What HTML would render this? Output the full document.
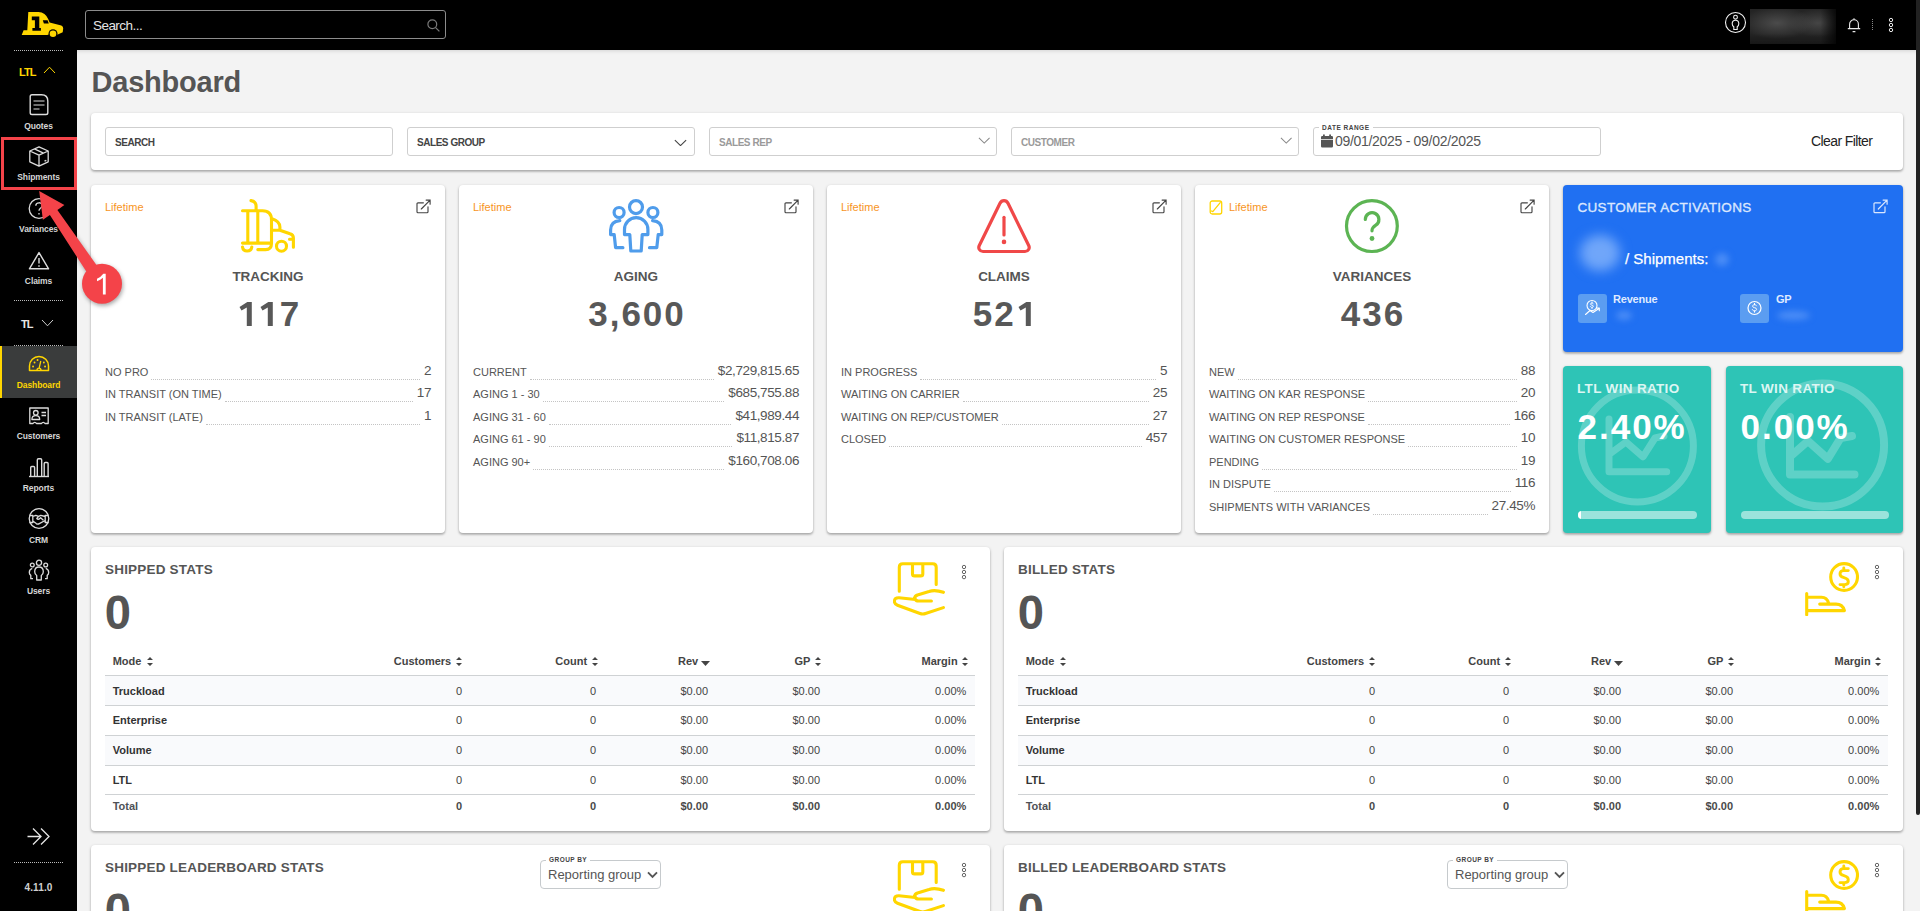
<!DOCTYPE html>
<html><head><meta charset="utf-8">
<style>
*{box-sizing:border-box;margin:0;padding:0}
html,body{width:1920px;height:911px;overflow:hidden;background:#f3f3f3;font-family:"Liberation Sans",sans-serif;color:#555}
.abs{position:absolute}
#top{position:absolute;left:0;top:0;width:1920px;height:50px;background:#000;box-shadow:0 1px 4px rgba(0,0,0,.13)}
#side{position:absolute;left:0;top:0;width:77px;height:911px;background:#000}
#sb{position:absolute;left:1916px;top:0;width:4px;height:815px;background:#222;border-radius:0 0 2px 2px}
.card{position:absolute;background:#fff;border-radius:4px;box-shadow:0 1px 3px rgba(0,0,0,.26),0 2px 2px rgba(0,0,0,.13)}
h1{position:absolute;left:91.500px;top:65px;font-size:29px;font-weight:bold;color:#555;line-height:34px;letter-spacing:-.22px}
/* stat cards */
.sc{top:185px;width:354px;height:348px}
.sc .lt{position:absolute;left:14px;top:15px;font-size:11px;line-height:14px;color:#f7941d}

.sc .ico{position:absolute;left:150px;top:14px;width:54px;height:54px;overflow:visible}
.sc .tt{position:absolute;left:0;width:100%;top:83.500px;text-align:center;font-size:13.5px;line-height:16px;font-weight:bold;color:#555}
.sc .num{position:absolute;left:0;width:100%;top:108.500px;text-align:center;font-size:35px;line-height:40px;font-weight:bold;color:#585858;letter-spacing:2px;text-indent:2px;white-space:nowrap}
.one{display:inline-block;width:21.460px;height:24px;position:relative;letter-spacing:0;text-indent:0}
.one svg{position:absolute;left:0;top:0}
.sc .rows{position:absolute;left:14px;right:14.0px;top:176px}
.r{display:flex;align-items:flex-end;height:22.5px;font-size:11px;color:#555}
.r .l{white-space:nowrap;line-height:13px;padding-bottom:4.800px}
.r .d{flex:1;border-bottom:1px dotted #c4c4c4;margin:0 4px 4px 3px;height:1px}
.r .v{font-size:13.500px;line-height:15px;white-space:nowrap;letter-spacing:-.4px;padding-bottom:5.700px}

/* topbar */
#srch{position:absolute;left:85px;top:10px;width:361px;height:29px;border:1px solid #8c8c8c;border-radius:3px}
#srch span{position:absolute;left:7px;top:6.600px;font-size:13.5px;line-height:16px;color:#e4e4e4;letter-spacing:-.55px}
#blur{position:absolute;left:1750px;top:9px;width:86px;height:35px;background:linear-gradient(to right,rgba(0,0,0,0) 82%,rgba(0,0,0,.75) 100%),linear-gradient(to bottom,rgba(0,0,0,0) 70%,rgba(0,0,0,.35) 100%),radial-gradient(ellipse 36px 16px at 27px 14px,#4b4b4b 0%,rgba(75,75,75,0) 100%),radial-gradient(ellipse 30px 14px at 68px 14px,#454545 0%,rgba(69,69,69,0) 100%),#242424}
/* sidebar */
.dot{position:absolute;left:14px;width:49px;height:0;border-top:1px dotted #bbb}
.si{position:absolute;left:0;width:77px;text-align:center;font-size:8.5px;font-weight:bold;color:#d6d6d6;line-height:10px;letter-spacing:-.1px}
.sic{position:absolute}
/* filter */
.fi{position:absolute;top:14px;width:288px;height:29px;border:1px solid #cfcfcf;border-radius:3px;background:#fff}
.fi .lb{position:absolute;left:9px;top:9px;font-size:10px;line-height:11px;font-weight:bold;letter-spacing:-.45px;color:#444}
.fi .lb.g{color:#9a9a9a}

#blue .t{position:absolute;left:14.500px;top:15px;font-size:13.500px;line-height:16px;color:#dbe7fe;letter-spacing:.3px;white-space:nowrap;-webkit-text-stroke:.35px #dbe7fe}
.blob{position:absolute;border-radius:50%;filter:blur(4px);background:#6ba2f8}
.bx{position:absolute;top:109px;width:29px;height:29px;border-radius:3px;background:#5b9df1}
.bl{position:absolute;top:108px;font-size:11px;line-height:13px;font-weight:bold;color:#dfeaff;letter-spacing:-.2px}
.tc .t{position:absolute;left:14px;top:15px;font-size:13.500px;line-height:16px;font-weight:bold;color:#dcf6f3;white-space:nowrap;letter-spacing:.33px}
.tc .n{position:absolute;left:14.500px;top:41px;font-size:35px;line-height:40px;font-weight:bold;color:#fff;white-space:nowrap;letter-spacing:2px}
.tc .pb{position:absolute;left:15px;top:145px;height:8px;border-radius:4px;background:rgba(255,255,255,.52);overflow:hidden}
.tc svg{position:absolute;left:0;top:0}

.pn .pt{position:absolute;left:14px;top:15.400px;font-size:13.500px;line-height:16px;font-weight:bold;color:#555;white-space:nowrap;letter-spacing:.2px}
.pn .big{position:absolute;left:13.800px;top:40px;font-size:47.200px;line-height:52px;font-weight:bold;color:#555}
.pn .pi{position:absolute;top:15px;width:54px;height:54px}
.pn .dots{position:absolute;top:17px;width:6px;height:16px}
.tb{position:absolute;left:14px;top:0;width:870px}
.tb .hl{position:absolute;left:0;width:870px;height:1px;background:#cfd2d4}
.tb .st{position:absolute;left:0;width:870px;height:29px;background:#f9fafc}
.tb span{position:absolute;font-size:11px;line-height:13px;white-space:nowrap;color:#444}
.tb .h{font-weight:bold;color:#444}
.tb .m{font-weight:bold;color:#333;left:7.700px}
.tb .ra{text-align:right}
.tb .f{font-weight:bold;color:#4a4a4a}
.tb svg{position:absolute}
.gb{position:absolute;top:15px;width:121px;height:29px;border:1px solid #c6cacd;border-radius:4px}
.gb .l{position:absolute;left:5px;top:-4.600px;padding:0 3px;background:#fff;font-size:6.500px;line-height:8px;font-weight:bold;color:#444;letter-spacing:.45px}
.gb .v{position:absolute;left:7px;top:6px;font-size:13px;line-height:15px;color:#555;white-space:nowrap}
</style></head><body>
<div id="top">
 <div id="srch"><span>Search...</span>
  <svg class="abs" style="left:341px;top:8px" width="13" height="13" viewBox="0 0 13 13" fill="none" stroke="#7a7a7a" stroke-width="1.2"><circle cx="5.3" cy="5.3" r="4.4"/><path d="M8.6 8.6L12.4 12.4"/></svg>
 </div>
 <svg class="abs" style="left:1724px;top:11px" width="23" height="23" viewBox="0 0 23 23" fill="none" stroke="#f2f2f2" stroke-width="1.1"><circle cx="11.5" cy="11.5" r="10"/><circle cx="11.5" cy="6.2" r="1.9"/><path d="M11.5 9.2c-2.2 0-3.3 1.6-3.3 3.6 0 1.5 0.7 2.5 1.6 3v2.7h3.4v-2.7c0.9-.5 1.6-1.5 1.6-3 0-2-1.1-3.6-3.3-3.6z"/></svg>
 <div id="blur"></div>
 <svg class="abs" style="left:1847px;top:17px" width="14" height="16" viewBox="0 0 14 16" fill="none" stroke="#e8e8e8" stroke-width="1.1"><path d="M7 1.2v1M2.6 11.5V7.2a4.4 4.4 0 0 1 8.8 0v4.3M0.8 11.6h12.4M5.6 14.6h2.8"/></svg>
 <div class="abs" style="left:1872px;top:19px;width:0;height:11px;border-left:1px dotted #888"></div>
 <svg class="abs" style="left:1888px;top:17px" width="6" height="16" viewBox="0 0 6 16" fill="none" stroke="#e8e8e8" stroke-width="1"><circle cx="3" cy="3" r="1.7"/><circle cx="3" cy="8" r="1.7"/><circle cx="3" cy="13" r="1.7"/></svg>
</div>
<div id="side">
 <svg class="abs" style="left:21px;top:11px" width="43" height="27" viewBox="0 0 43 27">
  <path fill="#ffd600" d="M7.300 0.900H17.400Q24.500 1.200 27.300 8.200L28.600 11.600L40.300 14.600Q42.400 15.400 42.200 17.600L41.700 21.300L36.800 23.600H26.800V24.100H0.700L2.600 19.200H6.300z"/>
  <circle cx="32" cy="22.800" r="4.500" fill="#000"/><circle cx="32" cy="22.800" r="3.300" fill="#ffd600"/>
  <path fill="#000" d="M10.800 5.400H18.300V17H19.900V19.700H11.400V17H13.900V9.300H10.800zM21.800 9.300H26.600L27.800 12.600H22.900z"/>
 </svg>
 <div class="dot" style="top:50px"></div>
 <div class="abs" style="left:19px;top:66px;font-size:11px;line-height:12px;font-weight:bold;color:#ffd600;letter-spacing:-.9px">LTL</div>
 <svg class="abs" style="left:43px;top:66px" width="13" height="8" viewBox="0 0 13 8" fill="none" stroke="#ffd600" stroke-width="1"><path d="M1 7L6.500 1.200L12 7"/></svg>

 <svg class="sic" style="left:28px;top:93px" width="22" height="23" viewBox="0 0 22 23" fill="none" stroke="#dcdcdc" stroke-width="1.4"><path d="M4 1.800h9.500q6.300 0 6.300 6.300v11.600q0 1.800-1.800 1.800h-14q-1.800 0-1.800-1.800v-16.100q0-1.800 1.800-1.800z"/><path d="M5.500 8h11M5.500 12h11M5.500 16h6" stroke-width="1.200"/></svg>
 <div class="si" style="top:121px">Quotes</div>

 <svg class="sic" style="left:28px;top:145px" width="22" height="23" viewBox="0 0 22 23" fill="none" stroke="#dcdcdc" stroke-width="1.300" stroke-linejoin="round"><path d="M11 1.800L20.200 6v10.800L11 21.200L1.800 16.800V6zM1.800 6L11 10.200L20.200 6M11 10.200v11M6.300 3.900l9.200 4.200"/><path d="M16.500 16.200l1.800-.9" stroke-width="1.500"/></svg>
 <div class="si" style="top:172px">Shipments</div>

 <svg class="sic" style="left:28px;top:197px" width="22" height="23" viewBox="0 0 22 23" fill="none" stroke="#dcdcdc" stroke-width="1.300"><circle cx="11" cy="11.500" r="9.800"/><path d="M7.800 8.800c0-4 6.400-4 6.400-.2 0 2.400-3.200 2.400-3.200 5.200M11 16v1.600"/></svg>
 <div class="si" style="top:224px">Variances</div>

 <svg class="sic" style="left:28px;top:251px" width="22" height="20" viewBox="0 0 22 20" fill="none" stroke="#dcdcdc" stroke-width="1.400" stroke-linejoin="round"><path d="M11 1.600L20.600 17.800H1.400z"/><path d="M11 7v5.500M11 14.200v1.600"/></svg>
 <div class="si" style="top:276px">Claims</div>

 <div class="dot" style="top:300px"></div>
 <div class="abs" style="left:21px;top:318px;font-size:11px;line-height:12px;font-weight:bold;color:#e6e6e6;letter-spacing:-.9px">TL</div>
 <svg class="abs" style="left:41px;top:319px" width="13" height="8" viewBox="0 0 13 8" fill="none" stroke="#cfcfcf" stroke-width="1"><path d="M1 1L6.500 6.800L12 1"/></svg>
 <div class="dot" style="top:345px"></div>

 <div class="abs" style="left:0;top:346px;width:77px;height:52px;background:#3a3c3c;border-left:2px solid #ffd600"></div>
 <svg class="sic" style="left:28px;top:355px" width="22" height="17" viewBox="0 0 22 17" fill="none" stroke="#ffd600" stroke-width="1.500" stroke-linejoin="round"><path d="M1.500 15.500v-4.500a9.500 9.500 0 0 1 19 0v4.500z"/><path d="M9 15.300c0-1.300 1-2.200 2-2.200s2 .9 2 2.200M11.200 12.800L12.800 6" stroke-width="1.300"/><path d="M5 11.500h.1M6.500 7.500h.1M9.500 5h.1M15.800 7.500h.1M17 11.500h.1" stroke-width="1.800" stroke-linecap="round"/></svg>
 <div class="si" style="top:380px;color:#ffd600">Dashboard</div>

 <svg class="sic" style="left:28px;top:406px" width="22" height="20" viewBox="0 0 22 20" fill="none" stroke="#dcdcdc" stroke-width="1.300" stroke-linejoin="round"><path d="M1.800 2h18.400v15.500h-3.200c-.8-1.600-2.700-1.600-3.500 0h-5c-.8-1.600-2.700-1.600-3.500 0H1.800z"/><circle cx="7.800" cy="6.800" r="2.300"/><path d="M3.900 13.500c0-2.600 1.700-3.800 3.900-3.800s3.900 1.200 3.900 3.800zM13.500 6.500h4.500M13.500 9.500h4.500"/></svg>
 <div class="si" style="top:431px">Customers</div>

 <svg class="sic" style="left:28px;top:457px" width="22" height="21" viewBox="0 0 22 21" fill="none" stroke="#dcdcdc" stroke-width="1.400"><path d="M1 19.500h20"/><path d="M2.700 19.500v-9q0-1 1-1h1.900q1 0 1 1v9M9.300 19.500v-16.500q0-1.200 1.200-1.200h2q1.200 0 1.200 1.200v16.500M16.200 19.500v-13q0-1 1-1h1.900q1 0 1 1v13"/></svg>
 <div class="si" style="top:483px">Reports</div>

 <svg class="sic" style="left:28px;top:507px" width="22" height="23" viewBox="0 0 22 23" fill="none" stroke="#dcdcdc" stroke-width="1.300" stroke-linejoin="round"><circle cx="11" cy="11.500" r="9.800"/><path d="M1.500 8.500h3.300v7h-3.300M20.500 8.500h-3.300v7h3.300M4.800 9.500l3-1.200 2.800 1 2.200-1 4.400 1.200M4.800 14l3.500 2.600c1 .7 2 .7 3 0l5.900-3.100M10.600 9.300l-1.800 2.200c.8 1 2 1 3 0l.8-.8 2.800 2.600"/></svg>
 <div class="si" style="top:535px">CRM</div>

 <svg class="sic" style="left:28px;top:559px" width="22" height="23" viewBox="0 0 22 23" fill="none" stroke="#dcdcdc" stroke-width="1.300" stroke-linejoin="round"><circle cx="11" cy="3.800" r="2.600"/><circle cx="4.300" cy="6" r="1.900"/><circle cx="17.700" cy="6" r="1.900"/><path d="M11 8c-3 0-4.300 2.200-4.300 4.800 0 1.700.8 3 2 3.700v4.500h4.600v-4.500c1.200-.7 2-2 2-3.700 0-2.600-1.300-4.800-4.300-4.800zM4.300 9.300c-2 .5-3 2.200-3 4.200 0 1.300.6 2.300 1.500 2.900v3.300h2.200M17.700 9.300c2 .5 3 2.200 3 4.200 0 1.300-.6 2.300-1.500 2.900v3.300h-2.200"/></svg>
 <div class="si" style="top:586px">Users</div>

 <svg class="sic" style="left:27px;top:827px" width="24" height="19" viewBox="0 0 24 19" fill="none" stroke="#e6e6e6" stroke-width="1.300"><path d="M0.500 9.500h13M6 1.500l8 8-8 8M14 1.500l8 8-8 8"/></svg>
 <div class="dot" style="top:862px"></div>
 <div class="abs" style="left:0;top:882px;width:77px;text-align:center;font-size:10px;line-height:11px;font-weight:bold;color:#d0d0d0;letter-spacing:.15px">4.11.0</div>
</div>
<div id="sb"></div>
<h1>Dashboard</h1>

<!-- filter card -->
<div class="card" id="filter" style="left:91px;top:113px;width:1812px;height:57px">
 <div class="fi" style="left:14px"><span class="lb">SEARCH</span></div>
 <div class="fi" style="left:316px"><span class="lb">SALES GROUP</span>
  <svg class="abs" style="left:266px;top:10.500px" width="13" height="7.800" viewBox="0 0 15 9" fill="none" stroke="#444" stroke-width="1.300"><path d="M1 1.200L7.500 7.600L14 1.200"/></svg></div>
 <div class="fi" style="left:618px"><span class="lb g">SALES REP</span>
  <svg class="abs" style="left:268px;top:9px" width="12.500" height="7.100" viewBox="0 0 14 8" fill="none" stroke="#8a8a8a" stroke-width="1.200"><path d="M1 1L7 6.800L13 1"/></svg></div>
 <div class="fi" style="left:920px"><span class="lb g">CUSTOMER</span>
  <svg class="abs" style="left:268px;top:9px" width="12.500" height="7.100" viewBox="0 0 14 8" fill="none" stroke="#8a8a8a" stroke-width="1.200"><path d="M1 1L7 6.800L13 1"/></svg></div>
 <div class="fi" style="left:1222px">
  <span class="abs" style="left:5px;top:-4px;padding:0 3px;background:#fff;font-size:6.500px;line-height:8px;font-weight:bold;color:#444;letter-spacing:.5px">DATE RANGE</span>
  <svg class="abs" style="left:7px;top:6px" width="12" height="14" viewBox="0 0 12 14" fill="#555"><path d="M2 0.600h1.800v1.400h4.400v-1.400h1.800v1.400h0.800q1.200 0 1.200 1.200v1.800h-12v-1.800q0-1.200 1.200-1.200h0.800zM0 5.800h12v6.400q0 1.200-1.200 1.200h-9.600q-1.200 0-1.200-1.200z"/></svg>
  <span class="abs" style="left:21px;top:5px;font-size:14px;line-height:16px;color:#555;letter-spacing:-.3px;white-space:nowrap">09/01/2025 - 09/02/2025</span>
 </div>
 <span class="abs" style="left:1720px;top:20px;font-size:14px;line-height:16px;color:#222;letter-spacing:-.6px;white-space:nowrap">Clear Filter</span>
</div>

<!-- stat cards -->
<div class="card sc" style="left:91px" id="c1">
  <div class="lt">Lifetime</div>
  <svg class="ico" viewBox="0 0 54 54" fill="none" stroke="#ffd600" stroke-width="3.100" stroke-linecap="round" stroke-linejoin="round"><path d="M10 1.600Q15.100 2.500 15.100 7V11.800M1.500 11.800H21.500Q30.500 11.800 30.500 21V44.500Q30.500 50.600 24.500 50.600H16.800M6.800 11.800V44.100M16.800 11.800V44.100M1.500 44.100H30.500M1.500 48A4.700 4.700 0 0 0 10.800 48M31 19.800Q38.900 22.500 38.900 28V31.200M30.500 31.200H38.900L49 34.800Q52.400 35.800 52.400 39V48.300M48.500 40.200H52"/><circle cx="40.500" cy="47.200" r="5"/></svg><svg class="ext" style="position:absolute;left:324.5px;top:13.5px;width:15px;height:15px" viewBox="0 0 15 15" fill="none" stroke="#444" stroke-width="1.15" stroke-linecap="round"><path d="M7.400 3.800H2Q1 3.800 1 4.800V12.700Q1 13.700 2 13.700H11Q12 13.700 12 12.700V7.800M5.300 10L14.100 1.100M10.100 1.100H14.100V5.200"/></svg>
  <div class="tt">TRACKING</div><div class="num"><i class="one"><svg width="21.4" height="24" viewBox="0 0 21.4 24.8" preserveAspectRatio="none"><path fill="#585858" d="M14.800 0V24.800H9.800V5.800L4.500 8.900L2.500 5.200L10.300 0Z"/></svg></i><i class="one"><svg width="21.4" height="24" viewBox="0 0 21.4 24.8" preserveAspectRatio="none"><path fill="#585858" d="M14.800 0V24.800H9.800V5.800L4.500 8.900L2.500 5.200L10.300 0Z"/></svg></i>7</div>
  <div class="rows">
    <div class="r"><span class="l">NO PRO</span><span class="d"></span><span class="v">2</span></div>
    <div class="r"><span class="l">IN TRANSIT (ON TIME)</span><span class="d"></span><span class="v">17</span></div>
    <div class="r"><span class="l">IN TRANSIT (LATE)</span><span class="d"></span><span class="v">1</span></div>
  </div>
</div>
<div class="card sc" style="left:459px" id="c2">
  <div class="lt">Lifetime</div>
  <svg class="ico" viewBox="0 0 54 54" fill="none" stroke="#4f9ceb" stroke-width="3.200" stroke-linecap="round" stroke-linejoin="round"><circle cx="27" cy="8.100" r="6.500"/><circle cx="10.100" cy="13.500" r="5"/><circle cx="43.900" cy="13.500" r="5"/><path d="M15.500 35.600V30.400A11.700 11.700 0 0 1 38.900 30.400V35.600H33.200L32.200 52H21.800L20.800 35.600ZM10.800 21.700Q1.600 22.500 1.600 31V35.600H5.200L6.600 48.700H13.900M43.600 21.700Q52.800 22.500 52.800 31V35.600H49.200L47.800 48.700H40.500"/></svg><svg class="ext" style="position:absolute;left:324.5px;top:13.5px;width:15px;height:15px" viewBox="0 0 15 15" fill="none" stroke="#444" stroke-width="1.15" stroke-linecap="round"><path d="M7.400 3.800H2Q1 3.800 1 4.800V12.700Q1 13.700 2 13.700H11Q12 13.700 12 12.700V7.800M5.300 10L14.100 1.100M10.100 1.100H14.100V5.200"/></svg>
  <div class="tt">AGING</div><div class="num">3,600</div>
  <div class="rows">
    <div class="r"><span class="l">CURRENT</span><span class="d"></span><span class="v">$2,729,815.65</span></div>
    <div class="r"><span class="l">AGING 1 - 30</span><span class="d"></span><span class="v">$685,755.88</span></div>
    <div class="r"><span class="l">AGING 31 - 60</span><span class="d"></span><span class="v">$41,989.44</span></div>
    <div class="r"><span class="l">AGING 61 - 90</span><span class="d"></span><span class="v">$11,815.87</span></div>
    <div class="r"><span class="l">AGING 90+</span><span class="d"></span><span class="v">$160,708.06</span></div>
  </div>
</div>
<div class="card sc" style="left:827px" id="c3">
  <div class="lt">Lifetime</div>
  <svg class="ico" viewBox="0 0 54 54" fill="none" stroke="#f04848" stroke-width="3.200" stroke-linecap="round" stroke-linejoin="round"><path d="M27 1.700c-1.800 0-3.200 1-4 2.600L2.300 46.500c-1.400 2.800.4 6 3.700 6H48c3.300 0 5.100-3.200 3.700-6L31 4.300c-.8-1.600-2.200-2.600-4-2.600z"/><path d="M27 18.300V36"/><circle cx="27" cy="42.900" r="2.300" fill="#f04848" stroke="none"/></svg><svg class="ext" style="position:absolute;left:324.5px;top:13.5px;width:15px;height:15px" viewBox="0 0 15 15" fill="none" stroke="#444" stroke-width="1.15" stroke-linecap="round"><path d="M7.400 3.800H2Q1 3.800 1 4.800V12.700Q1 13.700 2 13.700H11Q12 13.700 12 12.700V7.800M5.300 10L14.100 1.100M10.100 1.100H14.100V5.200"/></svg>
  <div class="tt">CLAIMS</div><div class="num">52<i class="one"><svg width="21.4" height="24" viewBox="0 0 21.4 24.8" preserveAspectRatio="none"><path fill="#585858" d="M14.800 0V24.800H9.800V5.800L4.500 8.900L2.500 5.200L10.300 0Z"/></svg></i></div>
  <div class="rows">
    <div class="r"><span class="l">IN PROGRESS</span><span class="d"></span><span class="v">5</span></div>
    <div class="r"><span class="l">WAITING ON CARRIER</span><span class="d"></span><span class="v">25</span></div>
    <div class="r"><span class="l">WAITING ON REP/CUSTOMER</span><span class="d"></span><span class="v">27</span></div>
    <div class="r"><span class="l">CLOSED</span><span class="d"></span><span class="v">457</span></div>
  </div>
</div>
<div class="card sc" style="left:1195px" id="c4">
  <div class="lt" style="left:34px">Lifetime</div>
  <svg class="abs" style="left:14px;top:15px" width="14" height="15" viewBox="0 0 14 15" fill="none" stroke="#ffd500" stroke-width="1.300" stroke-linecap="round" stroke-linejoin="round"><rect x="1.200" y="1" width="11.500" height="13" rx="2"/><path d="M11.200 2.600L3.800 11.600L2.400 11"/></svg><svg class="ico" viewBox="0 0 54 54" fill="none" stroke="#5cb453" stroke-width="3.200" stroke-linecap="round" stroke-linejoin="round"><circle cx="26.900" cy="27.100" r="25.400"/><path d="M20.300 20.500a6.800 6.800 0 1 1 10.500 5.700c-2.600 1.700-3.800 2.800-3.800 5.600"/><circle cx="27" cy="39.500" r="2.400" fill="#5cb453" stroke="none"/></svg><svg class="ext" style="position:absolute;left:324.5px;top:13.5px;width:15px;height:15px" viewBox="0 0 15 15" fill="none" stroke="#444" stroke-width="1.15" stroke-linecap="round"><path d="M7.400 3.800H2Q1 3.800 1 4.800V12.700Q1 13.700 2 13.700H11Q12 13.700 12 12.700V7.800M5.300 10L14.100 1.100M10.100 1.100H14.100V5.200"/></svg>
  <div class="tt">VARIANCES</div><div class="num">436</div>
  <div class="rows">
    <div class="r"><span class="l">NEW</span><span class="d"></span><span class="v">88</span></div>
    <div class="r"><span class="l">WAITING ON KAR RESPONSE</span><span class="d"></span><span class="v">20</span></div>
    <div class="r"><span class="l">WAITING ON REP RESPONSE</span><span class="d"></span><span class="v">166</span></div>
    <div class="r"><span class="l">WAITING ON CUSTOMER RESPONSE</span><span class="d"></span><span class="v">10</span></div>
    <div class="r"><span class="l">PENDING</span><span class="d"></span><span class="v">19</span></div>
    <div class="r"><span class="l">IN DISPUTE</span><span class="d"></span><span class="v">116</span></div>
    <div class="r"><span class="l">SHIPMENTS WITH VARIANCES</span><span class="d"></span><span class="v">27.45%</span></div>
  </div>
</div>

<!-- blue + teal -->
<div class="card" id="blue" style="left:1563px;top:185px;width:340px;height:167px;background:#2070f2">
 <div class="t">CUSTOMER ACTIVATIONS</div>
 <svg class="abs" style="left:310px;top:13.500px" width="15" height="15" viewBox="0 0 15 15" fill="none" stroke="#dbe7fe" stroke-width="1.200" stroke-linecap="round"><path d="M7.400 3.800H2Q1 3.800 1 4.800V12.700Q1 13.700 2 13.700H11Q12 13.700 12 12.700V7.800M5.300 10L14.100 1.100M10.100 1.100H14.100V5.200"/></svg>
 <div class="blob" style="left:17px;top:50px;width:40px;height:36px;filter:blur(6px);background:#70a6f9"></div>
 <div class="abs" style="left:62px;top:65px;font-size:15px;line-height:18px;color:#fff;white-space:nowrap;-webkit-text-stroke:.25px #fff">/ Shipments:</div>
 <div class="blob" style="left:152px;top:68px;width:14px;height:13px;background:#4a8cf6;filter:blur(3px)"></div>
 <div class="bx" style="left:15px"><svg width="29" height="29" viewBox="0 0 29 29" fill="none" stroke="#fff" stroke-width="1.100" stroke-linecap="round" stroke-linejoin="round"><circle cx="14" cy="11.500" r="5"/><path d="M7.500 20.500L12 16.500L15 18.500L21 14.500M18.500 14H21.300V16.800"/><path d="M15.300 9.800c-.3-.6-.8-.8-1.400-.8-.8 0-1.400.4-1.400 1.100 0 1.500 2.900.6 2.900 2.200 0 .7-.7 1.100-1.500 1.100-.7 0-1.300-.3-1.500-.9M14 8v.9M14 13.700v.9" stroke-width=".9"/></svg></div>
 <div class="bl" style="left:50px">Revenue</div>
 <div class="blob" style="left:53px;top:126px;width:16px;height:9px;background:#4a8cf6;filter:blur(3px)"></div>
 <div class="bx" style="left:177px"><svg width="29" height="29" viewBox="0 0 29 29" fill="none" stroke="#fff" stroke-width="1.200" stroke-linecap="round" stroke-linejoin="round"><circle cx="14.500" cy="14" r="6.500"/><path d="M16.500 11.800c-.4-.8-1.100-1.100-2-1.100-1.100 0-1.900.6-1.900 1.500 0 2.100 4 .9 4 3.100 0 1-.9 1.600-2.100 1.600-1 0-1.800-.4-2.100-1.300M14.500 9.400v1.300M14.500 16.900v1.300" stroke-width="1"/></svg></div>
 <div class="bl" style="left:213px">GP</div>
 <div class="blob" style="left:214px;top:126px;width:33px;height:9px;background:#4a8cf6;filter:blur(3px)"></div>
</div>
<div class="card tc" id="t1" style="left:1563px;top:366px;width:148px;height:167px;background:#2ec4b6;overflow:hidden">
 <svg width="148" height="167" fill="none" stroke="rgba(255,255,255,.23)" stroke-width="7" stroke-linecap="round" stroke-linejoin="round"><circle cx="74.400" cy="80" r="56"/><path d="M46 53V105.700H103.700M48 87L63 76L80 90.800L92 72L101 70"/></svg>
 <div class="t">LTL WIN RATIO</div><div class="n">2.40%</div>
 <div class="pb" style="width:119px"><div style="width:2.500px;height:8px;background:#fff"></div></div>
</div>
<div class="card tc" id="t2" style="left:1726px;top:366px;width:177px;height:167px;background:#2ec4b6;overflow:hidden">
 <svg width="177" height="167" fill="none" stroke="rgba(255,255,255,.23)" stroke-width="8" stroke-linecap="round" stroke-linejoin="round"><circle cx="96.600" cy="79" r="61.500"/><path d="M64 51V108.600H128.500M66 89L82 75L101.800 92.800L114.600 72L126 70"/></svg>
 <div class="t">TL WIN RATIO</div><div class="n">0.00%</div>
 <div class="pb" style="width:148px"></div>
</div>

<!-- bottom panels -->
<div class="card pn" id="p1" style="left:91px;top:547px;width:899px;height:284px"><div class="pt">SHIPPED STATS</div><div class="big">0</div><svg class="pi" style="left:802px" viewBox="0 0 54 54" fill="none" stroke="#ffd600" stroke-width="3.100" stroke-linecap="round" stroke-linejoin="round"><path d="M6.300 29.300V5.300Q6.300 1.800 9.800 1.800H39.700Q43.200 1.800 43.200 5.300V22.500M19.500 1.800V11.900Q19.500 13.900 21.500 13.900H27.800Q29.800 13.900 29.800 11.900V1.800M50.400 30.300Q42 27.500 36 29.500L24.500 33Q21 34.500 22 37Q23 39 25.500 39H38.400M22.300 37.500L6 35.700Q1.400 35.500 1.400 39.400Q1.400 42 4.500 43.200L27 51.500Q29.800 52.600 32.500 51.500L50.400 45.600"/></svg><svg class="dots" style="left:870px" viewBox="0 0 6 16" fill="none" stroke="#555" stroke-width=".9"><circle cx="3" cy="3" r="1.700"/><circle cx="3" cy="8" r="1.700"/><circle cx="3" cy="13.100" r="1.700"/></svg><div class="tb">
<div class="st" style="top:129px"></div><div class="st" style="top:189px;height:29px"></div>
<div class="hl" style="top:128px"></div>
<div class="hl" style="top:158px"></div>
<div class="hl" style="top:188px"></div>
<div class="hl" style="top:218px"></div>
<div class="hl" style="top:247px"></div>
<span class="h" style="left:7.700px;top:107.5px">Mode</span><svg style="left:41.9px;top:110.3px" width="6" height="9" viewBox="0 0 6 9" fill="#444"><path d="M3 0L6 3H0zM3 9L0 6H6z"/></svg>
<span class="h ra" style="right:523.8px;top:107.5px">Customers</span><svg style="left:351.0px;top:110.3px" width="6" height="9" viewBox="0 0 6 9" fill="#444"><path d="M3 0L6 3H0zM3 9L0 6H6z"/></svg>
<span class="h ra" style="right:387.9px;top:107.5px">Count</span><svg style="left:487.0px;top:110.3px" width="6" height="9" viewBox="0 0 6 9" fill="#444"><path d="M3 0L6 3H0zM3 9L0 6H6z"/></svg>
<span class="h ra" style="right:276.8px;top:107.5px">Rev</span><svg style="left:596.0px;top:113.5px" width="9" height="5" viewBox="0 0 9 5" fill="#444"><path d="M0 0H9L4.500 5z"/></svg>
<span class="h ra" style="right:164.6px;top:107.5px">GP</span><svg style="left:710.0px;top:110.3px" width="6" height="9" viewBox="0 0 6 9" fill="#444"><path d="M3 0L6 3H0zM3 9L0 6H6z"/></svg>
<span class="h ra" style="right:17.4px;top:107.5px">Margin</span><svg style="left:857.4px;top:110.3px" width="6" height="9" viewBox="0 0 6 9" fill="#444"><path d="M3 0L6 3H0zM3 9L0 6H6z"/></svg>
<span class="m" style="top:137.8px">Truckload</span>
<span class=" ra" style="right:513.0px;top:137.8px">0</span><span class=" ra" style="right:379.0px;top:137.8px">0</span><span class=" ra" style="right:267.0px;top:137.8px">$0.00</span><span class=" ra" style="right:155.0px;top:137.8px">$0.00</span><span class=" ra" style="right:8.7px;top:137.8px">0.00%</span>
<span class="m" style="top:167.2px">Enterprise</span>
<span class=" ra" style="right:513.0px;top:167.2px">0</span><span class=" ra" style="right:379.0px;top:167.2px">0</span><span class=" ra" style="right:267.0px;top:167.2px">$0.00</span><span class=" ra" style="right:155.0px;top:167.2px">$0.00</span><span class=" ra" style="right:8.7px;top:167.2px">0.00%</span>
<span class="m" style="top:197px">Volume</span>
<span class=" ra" style="right:513.0px;top:197px">0</span><span class=" ra" style="right:379.0px;top:197px">0</span><span class=" ra" style="right:267.0px;top:197px">$0.00</span><span class=" ra" style="right:155.0px;top:197px">$0.00</span><span class=" ra" style="right:8.7px;top:197px">0.00%</span>
<span class="m" style="top:226.8px">LTL</span>
<span class=" ra" style="right:513.0px;top:226.8px">0</span><span class=" ra" style="right:379.0px;top:226.8px">0</span><span class=" ra" style="right:267.0px;top:226.8px">$0.00</span><span class=" ra" style="right:155.0px;top:226.8px">$0.00</span><span class=" ra" style="right:8.7px;top:226.8px">0.00%</span>
<span class="m" style="top:253px;color:#4f5257">Total</span>
<span class="f ra" style="right:513.0px;top:253px">0</span><span class="f ra" style="right:379.0px;top:253px">0</span><span class="f ra" style="right:267.0px;top:253px">$0.00</span><span class="f ra" style="right:155.0px;top:253px">$0.00</span><span class="f ra" style="right:8.7px;top:253px">0.00%</span>
</div></div>
<div class="card pn" id="p2" style="left:1004px;top:547px;width:899px;height:284px"><div class="pt">BILLED STATS</div><div class="big">0</div><svg class="pi" style="left:801px" viewBox="0 0 54 54" fill="none" stroke="#ffd600" stroke-width="3.100" stroke-linecap="round" stroke-linejoin="round"><circle cx="39.100" cy="15" r="13.400"/><path d="M43.300 8.600H38.500Q35 8.600 35 12Q35 14.600 39 15.700Q43.300 16.900 43.300 19.700Q43.300 22.600 39.500 22.600H35M38.800 6V8.600M38.800 22.600V24.800" stroke-width="2.900"/><path d="M1.700 31.600V52.700M1.700 35.300H16.500Q22 35.300 23.700 41.400M14.700 42.100H31Q37.500 42.100 39.400 48.400M1.700 48.600H39.400"/></svg><svg class="dots" style="left:870px" viewBox="0 0 6 16" fill="none" stroke="#555" stroke-width=".9"><circle cx="3" cy="3" r="1.700"/><circle cx="3" cy="8" r="1.700"/><circle cx="3" cy="13.100" r="1.700"/></svg><div class="tb">
<div class="st" style="top:129px"></div><div class="st" style="top:189px;height:29px"></div>
<div class="hl" style="top:128px"></div>
<div class="hl" style="top:158px"></div>
<div class="hl" style="top:188px"></div>
<div class="hl" style="top:218px"></div>
<div class="hl" style="top:247px"></div>
<span class="h" style="left:7.700px;top:107.5px">Mode</span><svg style="left:41.9px;top:110.3px" width="6" height="9" viewBox="0 0 6 9" fill="#444"><path d="M3 0L6 3H0zM3 9L0 6H6z"/></svg>
<span class="h ra" style="right:523.8px;top:107.5px">Customers</span><svg style="left:351.0px;top:110.3px" width="6" height="9" viewBox="0 0 6 9" fill="#444"><path d="M3 0L6 3H0zM3 9L0 6H6z"/></svg>
<span class="h ra" style="right:387.9px;top:107.5px">Count</span><svg style="left:487.0px;top:110.3px" width="6" height="9" viewBox="0 0 6 9" fill="#444"><path d="M3 0L6 3H0zM3 9L0 6H6z"/></svg>
<span class="h ra" style="right:276.8px;top:107.5px">Rev</span><svg style="left:596.0px;top:113.5px" width="9" height="5" viewBox="0 0 9 5" fill="#444"><path d="M0 0H9L4.500 5z"/></svg>
<span class="h ra" style="right:164.6px;top:107.5px">GP</span><svg style="left:710.0px;top:110.3px" width="6" height="9" viewBox="0 0 6 9" fill="#444"><path d="M3 0L6 3H0zM3 9L0 6H6z"/></svg>
<span class="h ra" style="right:17.4px;top:107.5px">Margin</span><svg style="left:857.4px;top:110.3px" width="6" height="9" viewBox="0 0 6 9" fill="#444"><path d="M3 0L6 3H0zM3 9L0 6H6z"/></svg>
<span class="m" style="top:137.8px">Truckload</span>
<span class=" ra" style="right:513.0px;top:137.8px">0</span><span class=" ra" style="right:379.0px;top:137.8px">0</span><span class=" ra" style="right:267.0px;top:137.8px">$0.00</span><span class=" ra" style="right:155.0px;top:137.8px">$0.00</span><span class=" ra" style="right:8.7px;top:137.8px">0.00%</span>
<span class="m" style="top:167.2px">Enterprise</span>
<span class=" ra" style="right:513.0px;top:167.2px">0</span><span class=" ra" style="right:379.0px;top:167.2px">0</span><span class=" ra" style="right:267.0px;top:167.2px">$0.00</span><span class=" ra" style="right:155.0px;top:167.2px">$0.00</span><span class=" ra" style="right:8.7px;top:167.2px">0.00%</span>
<span class="m" style="top:197px">Volume</span>
<span class=" ra" style="right:513.0px;top:197px">0</span><span class=" ra" style="right:379.0px;top:197px">0</span><span class=" ra" style="right:267.0px;top:197px">$0.00</span><span class=" ra" style="right:155.0px;top:197px">$0.00</span><span class=" ra" style="right:8.7px;top:197px">0.00%</span>
<span class="m" style="top:226.8px">LTL</span>
<span class=" ra" style="right:513.0px;top:226.8px">0</span><span class=" ra" style="right:379.0px;top:226.8px">0</span><span class=" ra" style="right:267.0px;top:226.8px">$0.00</span><span class=" ra" style="right:155.0px;top:226.8px">$0.00</span><span class=" ra" style="right:8.7px;top:226.8px">0.00%</span>
<span class="m" style="top:253px;color:#4f5257">Total</span>
<span class="f ra" style="right:513.0px;top:253px">0</span><span class="f ra" style="right:379.0px;top:253px">0</span><span class="f ra" style="right:267.0px;top:253px">$0.00</span><span class="f ra" style="right:155.0px;top:253px">$0.00</span><span class="f ra" style="right:8.7px;top:253px">0.00%</span>
</div></div>
<div class="card pn" id="p3" style="left:91px;top:845px;width:899px;height:120px"><div class="pt">SHIPPED LEADERBOARD STATS</div><div class="big">0</div><div class="gb" style="left:449px"><span class="l">GROUP BY</span><span class="v">Reporting group</span><svg class="abs" style="left:106px;top:10px" width="11" height="8" viewBox="0 0 11 8" fill="none" stroke="#555" stroke-width="1.900"><path d="M1 1.300L5.500 5.800L10 1.300"/></svg></div><svg class="pi" style="left:802px" viewBox="0 0 54 54" fill="none" stroke="#ffd600" stroke-width="3.100" stroke-linecap="round" stroke-linejoin="round"><path d="M6.300 29.300V5.300Q6.300 1.800 9.800 1.800H39.700Q43.200 1.800 43.200 5.300V22.500M19.500 1.800V11.900Q19.500 13.900 21.500 13.900H27.800Q29.800 13.900 29.800 11.900V1.800M50.400 30.300Q42 27.500 36 29.500L24.500 33Q21 34.500 22 37Q23 39 25.500 39H38.400M22.300 37.500L6 35.700Q1.400 35.500 1.400 39.400Q1.400 42 4.500 43.200L27 51.500Q29.800 52.600 32.500 51.500L50.400 45.600"/></svg><svg class="dots" style="left:870px" viewBox="0 0 6 16" fill="none" stroke="#555" stroke-width=".9"><circle cx="3" cy="3" r="1.700"/><circle cx="3" cy="8" r="1.700"/><circle cx="3" cy="13.100" r="1.700"/></svg></div>
<div class="card pn" id="p4" style="left:1004px;top:845px;width:899px;height:120px"><div class="pt">BILLED LEADERBOARD STATS</div><div class="big">0</div><div class="gb" style="left:443px"><span class="l">GROUP BY</span><span class="v">Reporting group</span><svg class="abs" style="left:106px;top:10px" width="11" height="8" viewBox="0 0 11 8" fill="none" stroke="#555" stroke-width="1.900"><path d="M1 1.300L5.500 5.800L10 1.300"/></svg></div><svg class="pi" style="left:801px" viewBox="0 0 54 54" fill="none" stroke="#ffd600" stroke-width="3.100" stroke-linecap="round" stroke-linejoin="round"><circle cx="39.100" cy="15" r="13.400"/><path d="M43.300 8.600H38.500Q35 8.600 35 12Q35 14.600 39 15.700Q43.300 16.900 43.300 19.700Q43.300 22.600 39.500 22.600H35M38.800 6V8.600M38.800 22.600V24.800" stroke-width="2.900"/><path d="M1.700 31.600V52.700M1.700 35.300H16.500Q22 35.300 23.700 41.400M14.700 42.100H31Q37.500 42.100 39.400 48.400M1.700 48.600H39.400"/></svg><svg class="dots" style="left:870px" viewBox="0 0 6 16" fill="none" stroke="#555" stroke-width=".9"><circle cx="3" cy="3" r="1.700"/><circle cx="3" cy="8" r="1.700"/><circle cx="3" cy="13.100" r="1.700"/></svg></div>
<!-- annotation -->
<svg class="abs" style="left:0;top:130px;filter:drop-shadow(1px 2px 2px rgba(0,0,0,.35))" width="140" height="190" viewBox="0 130 140 190">
 <polygon fill="#f44349" points="39.200,191 64.400,205.100 57.400,209.900 107.400,280.400 96.600,287.600 49.900,214.900 42.900,219.700"/>
 <circle cx="102" cy="283.700" r="20" fill="#f44349"/>
 <path fill="#fff" d="M103.300 273.700H105.700V294.500H102.900V277.700Q100.600 279.900 97 281.200V278.700Q101 276.900 103.300 273.700Z"/>
</svg>
<div class="abs" style="left:1px;top:137px;width:76px;height:53px;border:3px solid #f44349"></div>
</body></html>
